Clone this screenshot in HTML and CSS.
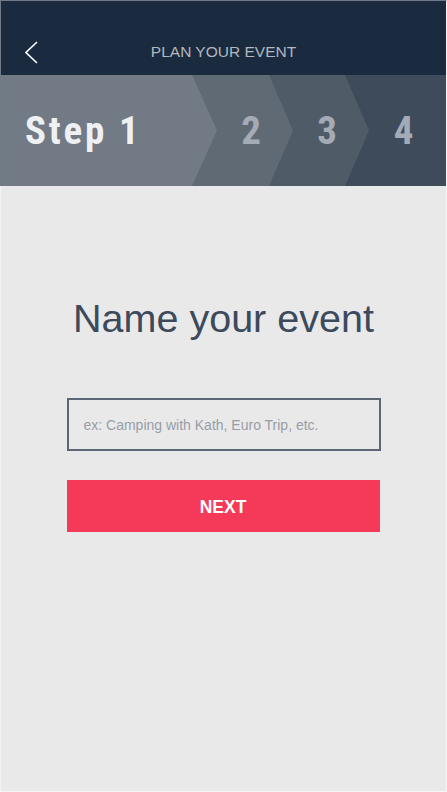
FILE: index.html
```html
<!DOCTYPE html>
<html>
<head>
<meta charset="utf-8">
<link rel="stylesheet" href="styles.css">
</head>
<body>
<div class="frame">
  <header class="topbar">
    <svg class="back" width="14" height="24" viewBox="0 0 14 24"><polyline points="12,1 1,11.5 12,22" fill="none" stroke="#ffffff" stroke-width="1.6"/></svg>
    <div class="title">PLAN YOUR EVENT</div>
  </header>
  <nav class="steps">
    <div class="step s1">Step 1</div>
    <div class="step s2">2</div>
    <div class="step s3">3</div>
    <div class="step s4">4</div>
  </nav>
  <main class="content">
    <h1 class="heading">Name your event</h1>
    <input class="field" type="text" placeholder="ex: Camping with Kath, Euro Trip, etc.">
    <button class="next">NEXT</button>
  </main>
</div>
</body>
</html>
```
FILE: styles.css
```css
html, body { margin: 0; padding: 0; }
body { width: 447px; height: 792px; overflow: hidden; font-family: "Liberation Sans", Arial, sans-serif; }
.frame {
  width: 447px; height: 792px; box-sizing: border-box;
  border-top: 1px solid #6f7987;
  border-right: 1px solid #f6f6f6; border-bottom: 1px solid #f6f6f6;
  background: #e9e9e9;
  display: flex; flex-direction: column;
}
.topbar {
  height: 74px; box-sizing: border-box; padding-top: 28px;
  background: #1a2b40; border-left: 1px solid #6f7987;
  display: flex; align-items: flex-start; position: relative;
}
.back { position: absolute; left: 24px; top: 40px; }
.title {
  flex: 1; text-align: center; height: 46px; line-height: 46px;
  color: #b3b7be; font-size: 15.5px;
}
.steps { height: 111px; display: flex; border-left: 1px solid #6f7987; }
.step {
  position: relative; height: 111px; display: flex; align-items: center;
  font-family: "Liberation Sans Narrow", "Roboto Condensed", "Liberation Sans", sans-serif;
  font-weight: bold; font-size: 39px; color: #a4abb5;
}
.s1 {
  width: 216px; z-index: 4; background: #717a85; color: #eef0f4;
  padding-left: 24px; box-sizing: border-box; letter-spacing: 2.8px;
  clip-path: polygon(0 0, 191px 0, 216px 50%, 191px 100%, 0 100%);
}
.s2, .s3 {
  width: 101px; margin-left: -25px; box-sizing: border-box;
  padding-left: 25px; padding-right: 8px; justify-content: center;
  clip-path: polygon(0 0, 77px 0, 101px 50%, 77px 100%, 0 100%);
}
.s2 { z-index: 3; background: #606a75; }
.s3 { z-index: 2; background: #505b68; }
.s4 {
  flex: 1; margin-left: -25px; z-index: 1; background: #3e4b5a;
  padding-left: 25px; padding-right: 8px; justify-content: center;
}
.content {
  flex: 1; display: flex; flex-direction: column; align-items: center;
  padding-top: 108px; border-left: 1px solid #f3f3f3;
}
.heading {
  margin: 0; font-weight: normal; font-size: 39.5px; line-height: 48px;
  color: #3c4a5c; text-align: center;
}
.field {
  margin-top: 56px; width: 314px; height: 53px; box-sizing: border-box;
  border: 2px solid #5b6677; background: transparent; outline: none;
  padding: 0 0 0 15px; font-family: "Liberation Sans", Arial, sans-serif;
  font-size: 14px; color: #3c4a5c;
}
.field::placeholder { color: #989ea7; }
.next {
  margin-top: 29px; width: 313px; height: 52px; border: 0;
  background: #f43a58; color: #ffffff; font-family: "Liberation Sans", Arial, sans-serif;
  font-weight: bold; font-size: 17.5px; padding: 3px 0 0 0; margin-left: -1px;
}
```
